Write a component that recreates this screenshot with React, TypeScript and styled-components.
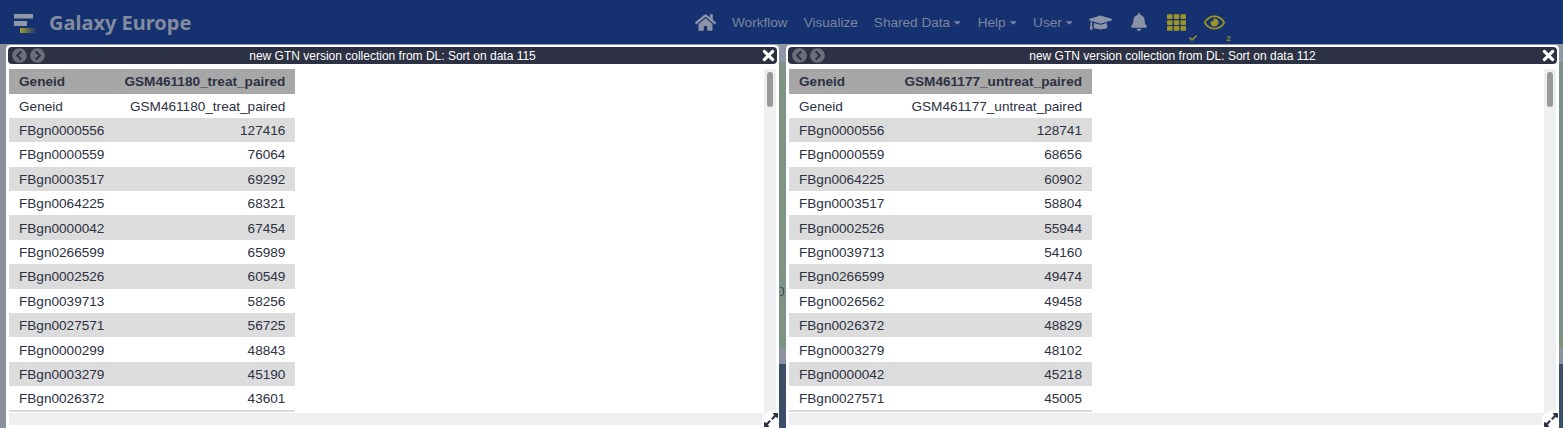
import { createGlobalStyle, styled } from "styled-components";
import {
  FaBell,
  FaCaretDown,
  FaCheck,
  FaChevronCircleLeft,
  FaChevronCircleRight,
  FaExpandAlt,
  FaGraduationCap,
  FaHome,
  FaRegEye,
  FaTh,
  FaTimes,
} from "react-icons/fa";

const GlobalStyle = createGlobalStyle`
  html, body {
    margin: 0;
    height: 100%;
    overflow: hidden;
    font-family: "Liberation Sans", Arial, sans-serif;
    background: #3d4f66;
  }
`;

type Row = [string, string];

const leftRows: Row[] = [
  ["Geneid", "GSM461180_treat_paired"],
  ["FBgn0000556", "127416"],
  ["FBgn0000559", "76064"],
  ["FBgn0003517", "69292"],
  ["FBgn0064225", "68321"],
  ["FBgn0000042", "67454"],
  ["FBgn0266599", "65989"],
  ["FBgn0002526", "60549"],
  ["FBgn0039713", "58256"],
  ["FBgn0027571", "56725"],
  ["FBgn0000299", "48843"],
  ["FBgn0003279", "45190"],
  ["FBgn0026372", "43601"],
];

const rightRows: Row[] = [
  ["Geneid", "GSM461177_untreat_paired"],
  ["FBgn0000556", "128741"],
  ["FBgn0000559", "68656"],
  ["FBgn0064225", "60902"],
  ["FBgn0003517", "58804"],
  ["FBgn0002526", "55944"],
  ["FBgn0039713", "54160"],
  ["FBgn0266599", "49474"],
  ["FBgn0026562", "49458"],
  ["FBgn0026372", "48829"],
  ["FBgn0003279", "48102"],
  ["FBgn0000042", "45218"],
  ["FBgn0027571", "45005"],
];

function DataFrame({ title, rows, width }: { title: string; rows: Row[]; width: number }) {
  return (
    <Frame>
      <TitleBar>
        <TitleNav>
          <FaChevronCircleLeft />
          <FaChevronCircleRight />
        </TitleNav>
        <TitleText>{title}</TitleText>
        <CloseIcon>
          <FaTimes />
        </CloseIcon>
      </TitleBar>
      <FrameBody>
        <Content>
          <Table $width={width}>
            <thead>
              <tr>
                <HeadCell>{rows[0][0]}</HeadCell>
                <HeadCell $right>{rows[0][1]}</HeadCell>
              </tr>
            </thead>
            <tbody>
              {rows.map((row) => (
                <tr key={row[0]}>
                  <Cell>{row[0]}</Cell>
                  <Cell $right>{row[1]}</Cell>
                </tr>
              ))}
            </tbody>
          </Table>
        </Content>
        <VerticalTrack>
          <Thumb />
        </VerticalTrack>
      </FrameBody>
      <HorizontalTrack />
      <ResizeHandle>
        <FaExpandAlt />
      </ResizeHandle>
    </Frame>
  );
}

export default function App() {
  return (
    <>
      <GlobalStyle />
      <Navbar>
        <Brand>
          <svg width="36" height="24" viewBox="0 0 36 24">
            <defs>
              <linearGradient id="fade" x1="0" x2="1" y1="0" y2="0">
                <stop offset="0" stopColor="#a39a3a" />
                <stop offset="1" stopColor="#a39a3a" stopOpacity="0" />
              </linearGradient>
            </defs>
            <rect x="1" y="4" width="19" height="4.5" fill="#8f97a8" />
            <rect x="1" y="11" width="13" height="5" fill="#8f97a8" />
            <rect x="7" y="18" width="17" height="5" fill="url(#fade)" />
          </svg>
          <BrandName>Galaxy Europe</BrandName>
        </Brand>
        <NavItems>
          <NavIcon $size={21}>
            <FaHome />
          </NavIcon>
          <NavLink>Workflow</NavLink>
          <NavLink>Visualize</NavLink>
          <NavLink>
            Shared Data
            <FaCaretDown />
          </NavLink>
          <NavLink>
            Help
            <FaCaretDown />
          </NavLink>
          <NavLink>
            User
            <FaCaretDown />
          </NavLink>
          <IconGroup>
            <NavIcon $size={23}>
              <FaGraduationCap />
            </NavIcon>
            <NavIcon $size={18}>
              <FaBell />
            </NavIcon>
            <NavIcon $size={19} $active>
              <FaTh />
              <Badge $left={21} $top={23}>
                <FaCheck />
              </Badge>
            </NavIcon>
            <NavIcon $size={21} $active>
              <FaRegEye />
              <Badge $left={22} $top={24}>
                2
              </Badge>
            </NavIcon>
          </IconGroup>
        </NavItems>
      </Navbar>
      <Stage>
        <DataFrame title="new GTN version collection from DL: Sort on data 115" rows={leftRows} width={286} />
        <DataFrame title="new GTN version collection from DL: Sort on data 112" rows={rightRows} width={303} />
        <GutterMark />
      </Stage>
    </>
  );
}

const Navbar = styled("nav")`
  height: 44px;
  background: #15316f;
  display: flex;
  align-items: center;
  padding-left: 13px;
`;

const Brand = styled("div")`
  width: 682px;
  display: flex;
  align-items: center;
  svg {
    flex: none;
  }
`;

const BrandName = styled("span")`
  font-family: "Noto Sans", sans-serif;
  font-size: 20px;
  font-weight: 700;
  color: #828b9f;
`;

const NavItems = styled("div")`
  display: flex;
  align-items: center;
  gap: 16px;
`;

const IconGroup = styled("div")`
  display: flex;
  align-items: center;
  gap: 18.5px;
  margin-left: -0.5px;
`;

const NavLink = styled("span")`
  font-size: 13.6px;
  color: #7a869f;
  display: flex;
  align-items: center;
  svg {
    width: 8.5px;
    height: 11px;
    margin-left: 3px;
  }
`;

const NavIcon = styled("span")<{ $size: number; $active?: boolean }>`
  position: relative;
  display: flex;
  width: ${(p) => p.$size}px;
  height: 22px;
  align-items: center;
  justify-content: center;
  color: ${(p) => (p.$active ? "#9c9426" : "#8b93a6")};
  font-size: ${(p) => p.$size}px;
`;

const Badge = styled("span")<{ $left: number; $top: number }>`
  position: absolute;
  left: ${(p) => p.$left}px;
  top: ${(p) => p.$top}px;
  font-size: 8px;
  font-weight: 700;
  line-height: 8px;
  display: flex;
  svg {
    width: 10px;
    height: 8px;
  }
`;

const Stage = styled("main")`
  position: relative;
  height: 384px;
  display: flex;
  gap: 7px;
  padding: 1px 4px 0 6px;
  box-sizing: border-box;
  background:
    linear-gradient(to right, #8a8f9e 6px, transparent 6px),
    linear-gradient(
      to bottom,
      #8f96a8 0,
      #8f96a8 18px,
      #7b9484 18px,
      #7b9484 304px,
      #8c93a0 304px,
      #8c93a0 320px,
      #3d4f66 320px
    );
`;

const GutterMark = styled("span")`
  position: absolute;
  left: 780px;
  top: 243px;
  width: 3px;
  height: 7px;
  border: 1px solid #3d4f66;
  border-left: none;
  border-radius: 0 3px 3px 0;
`;

const Frame = styled("section")`
  position: relative;
  flex: 1;
  min-width: 0;
  height: 383px;
  box-sizing: border-box;
  background: #fff;
  border-radius: 4px 4px 0 0;
  padding: 2px 2px 3px 2px;
  display: flex;
  flex-direction: column;
`;

const TitleBar = styled("header")`
  height: 17px;
  flex: none;
  position: relative;
  background: #2c3143;
  border-radius: 4px;
  display: flex;
  align-items: center;
  justify-content: center;
`;

const TitleNav = styled("div")`
  position: absolute;
  left: 4px;
  top: 1px;
  display: flex;
  gap: 3px;
  font-size: 15px;
  color: #6b6f7c;
`;

const TitleText = styled("span")`
  font-size: 12px;
  color: #fff;
`;

const CloseIcon = styled("span")`
  position: absolute;
  right: 0;
  top: 0;
  display: flex;
  font-size: 17px;
  color: #fff;
`;

const FrameBody = styled("div")`
  flex: 1;
  min-height: 0;
  margin-top: 5px;
  display: flex;
  overflow: hidden;
`;

const Content = styled("div")`
  flex: 1;
  min-width: 0;
  padding-left: 1px;
  overflow: hidden;
`;

const Table = styled("table")<{ $width: number }>`
  width: ${(p) => p.$width}px;
  border-collapse: collapse;
  font-size: 13.6px;
  color: #2c3143;
  border-bottom: 2px solid #dbdbdb;
  tbody tr:nth-child(even) {
    background: #dcdcdc;
  }
`;

const HeadCell = styled("th")<{ $right?: boolean }>`
  height: 24.5px;
  padding: 0 10px;
  box-sizing: border-box;
  background: #a7a7a7;
  text-align: ${(p) => (p.$right ? "right" : "left")};
`;

const Cell = styled("td")<{ $right?: boolean }>`
  height: 24.4px;
  padding: 1px 10px 0;
  box-sizing: border-box;
  text-align: ${(p) => (p.$right ? "right" : "left")};
`;

const VerticalTrack = styled("div")`
  flex: none;
  width: 12px;
  margin-right: 1px;
  background: #eeeff1;
  padding: 3px;
  box-sizing: border-box;
`;

const Thumb = styled("div")`
  width: 6px;
  height: 35px;
  border-radius: 3px;
  background: #999;
`;

const HorizontalTrack = styled("div")`
  flex: none;
  height: 12px;
  margin-left: 1px;
  margin-right: 1px;
  background: #eeeff1;
`;

const ResizeHandle = styled("div")`
  position: absolute;
  right: 0;
  bottom: 0;
  width: 17px;
  height: 17px;
  border-radius: 9px 0 0 0;
  background: #fff;
  color: #2c3143;
  display: flex;
  align-items: center;
  justify-content: center;
  font-size: 16px;
`;
